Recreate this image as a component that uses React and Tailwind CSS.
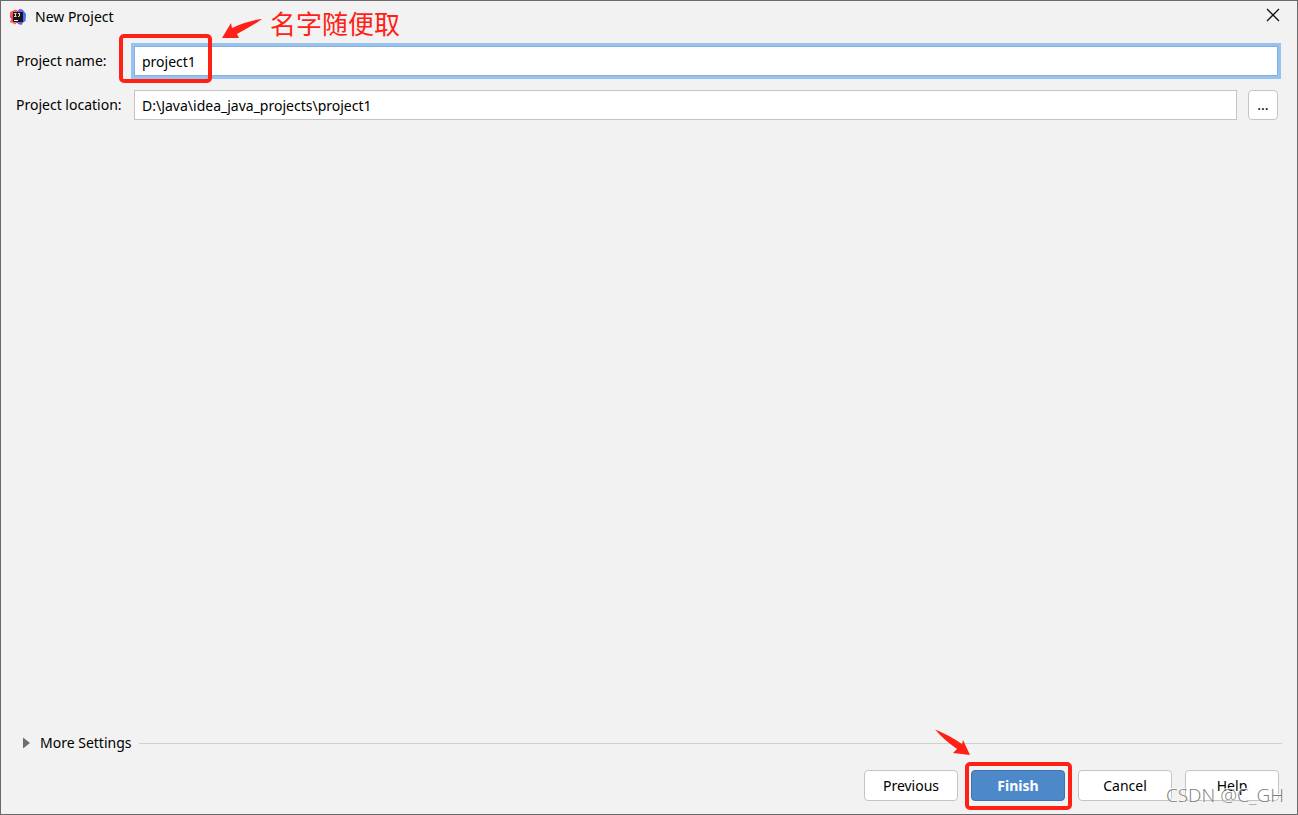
import React, { useState } from 'react'

// Product logo in the title bar
const AppLogo = () => (
  <svg viewBox="0 0 16 16" className="h-4 w-4 shrink-0" aria-hidden="true">
    <path d="M0 3.5 2 2 6 0.5 9 4 5 11 0 8.5Z" fill="#fb5a3c" />
    <path d="M0 7 5 6 8 13 5 15 0 13 1.5 10Z" fill="#ee3d78" />
    <path d="M0 13 5 11 6 15.5Z" fill="#fb7a3c" />
    <path d="M7 3 9.5 0 13 1 16 5 15.5 12 12 14 6 13Z" fill="#3f74f5" />
    <path d="M8 1.5 10 0 13 1 10 4 7 3.5Z" fill="#a04be0" />
    <path d="M6 12 15 10.5 11.5 16 8 15Z" fill="#7558f0" />
    <rect x="3" y="3" width="10" height="10" fill="#1a1618" />
    <path d="M4 4.5h2.5M5.5 4.5v3M4 7.5h2.5M8 4.5h2M9.5 4.5v2.5q0 .6-1.5.5" stroke="#ddd" strokeWidth="1" fill="none" />
    <rect x="4" y="11" width="4" height="1" fill="#fff" />
  </svg>
)

const fieldClass =
  'h-[30px] w-full min-w-0 rounded-none bg-white px-[7px] text-sm text-black outline-none'

const buttonClass =
  'h-[31px] w-[94px] rounded border border-[#c4c4c4] bg-white text-sm text-black'

export default function App() {
  const [name, setName] = useState('project1')
  const [location, setLocation] = useState('D:\\Java\\idea_java_projects\\project1')

  return (
    <div className="relative flex min-h-screen flex-col border border-[#6b696b] bg-[#f2f2f2] font-['Noto_Sans','Noto_Sans_CJK_SC',sans-serif] text-sm text-black">
      {/* Title bar */}
      <header className="flex h-8 items-center gap-[9px] pr-4 pl-[9px]">
        <AppLogo />
        <h1 className="grow">New Project</h1>
        <button type="button" aria-label="Close" className="flex h-4 w-4 items-center justify-center">
          <svg viewBox="0 0 14 14" className="mb-1 h-[14px] w-[14px] shrink-0">
            <path d="M1 1 13 13M13 1 1 13" stroke="#111" strokeWidth="1.3" />
          </svg>
        </button>
      </header>

      <main className="flex grow flex-col gap-[14px] pt-[13px] pr-[19px] pl-[15px]">
        <div className="flex items-center">
          <label htmlFor="name" className="w-[118px] shrink-0">Project name:</label>
          <div className="relative flex grow">
            <input
              id="name"
              value={name}
              onChange={e => setName(e.target.value)}
              className={`${fieldClass} border border-[#87afda] ring-3 ring-[#97c3f3]`}
            />
            {/* Note on the name field */}
            <div className="pointer-events-none absolute -top-3 -left-[15px] h-[49px] w-[93px] rounded-[5px] border-4 border-[#ff2116]" />
            <svg viewBox="0 0 42 22" className="pointer-events-none absolute -top-7 left-[87px] h-[22px] w-[42px]">
              <path d="M1 20 10 5 11 10Q25 3 41 1Q33 7 16 16L18 20Z" fill="#ff2116" />
            </svg>
            <span className="pointer-events-none absolute -top-10 left-[136px] text-[26px] leading-9 whitespace-nowrap text-[#ff2116]">名字随便取</span>
          </div>
        </div>

        <div className="flex items-center">
          <label htmlFor="location" className="w-[118px] shrink-0">Project location:</label>
          <input
            id="location"
            value={location}
            onChange={e => setLocation(e.target.value)}
            className={`${fieldClass} border border-[#c4c4c4]`}
          />
          <button type="button" aria-label="Browse" className="ml-[11px] h-[30px] w-[30px] shrink-0 rounded border border-[#c4c4c4] bg-white text-sm">...</button>
        </div>
      </main>

      <footer className="flex flex-col gap-[17px] pb-[13px]">
        <div className="flex items-center gap-2 pr-[15px] pl-[22px]">
          <button type="button" className="flex items-center gap-[10px]">
            <svg viewBox="0 0 7 12" className="h-3 w-[7px]">
              <path d="M0 0.5 7 6 0 11.5Z" fill="#6e6e6e" />
            </svg>
            More Settings
          </button>
          <hr className="grow border-[#d0d0d0]" />
        </div>

        <div className="flex justify-end gap-[13px] pr-[18px]">
          <button type="button" className={buttonClass}>Previous</button>
          <div className="relative">
            <button type="button" className="h-[31px] w-[94px] rounded border border-[#3c73b0] bg-[#4d89c9] text-sm font-bold text-white">Finish</button>
            {/* Note on the Finish button */}
            <div className="pointer-events-none absolute -top-2 -left-[6px] h-12 w-[107px] rounded-[5px] border-4 border-[#ff2116]" />
            <svg viewBox="0 0 36 28" className="pointer-events-none absolute -top-[41px] -left-9 h-7 w-9">
              <path d="M0 0.5Q14 6 27 15L28 11 35 26 18 24 22 20Q9 11 0 0.5Z" fill="#ff2116" />
            </svg>
          </div>
          <button type="button" className={buttonClass}>Cancel</button>
          <button type="button" className={buttonClass}>Help</button>
        </div>
      </footer>

      <span className="pointer-events-none absolute right-[13px] bottom-[5px] font-['Open_Sans','Noto_Sans_CJK_SC',sans-serif] text-[19px] leading-7 font-light text-[#7c7c7c] [text-shadow:-1px_-1px_0_#ffffff]">CSDN @C_GH</span>
    </div>
  )
}
